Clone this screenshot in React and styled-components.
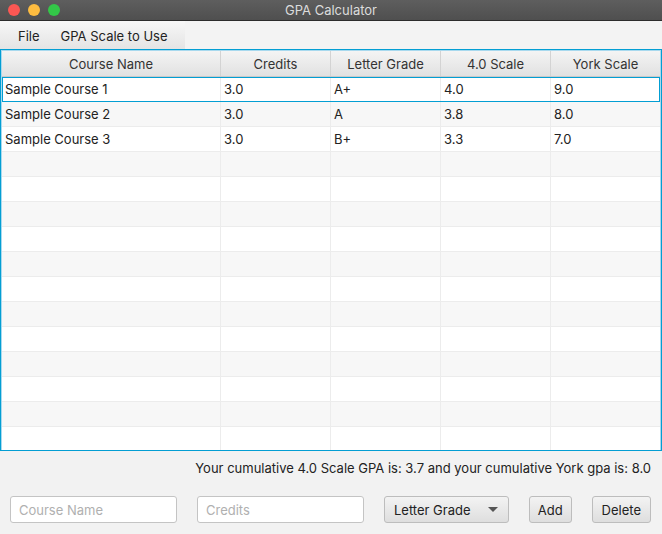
import styled, { createGlobalStyle } from "styled-components";

const GlobalStyle = createGlobalStyle`
  html, body {
    margin: 0;
    padding: 0;
    background: #f2f2f2;
  }
  body {
    font-family: Inter, Roboto, "Liberation Sans", sans-serif;
    font-size: 13px;
    color: #333;
  }
`;

const COLUMNS = [
  { key: "name", label: "Course Name", width: 219 },
  { key: "credits", label: "Credits", width: 110 },
  { key: "letter", label: "Letter Grade", width: 110 },
  { key: "four", label: "4.0 Scale", width: 110 },
  { key: "york", label: "York Scale", width: 110 },
];

const COURSES = [
  { name: "Sample Course 1", credits: "3.0", letter: "A+", four: "4.0", york: "9.0" },
  { name: "Sample Course 2", credits: "3.0", letter: "A", four: "3.8", york: "8.0" },
  { name: "Sample Course 3", credits: "3.0", letter: "B+", four: "3.3", york: "7.0" },
];

const EMPTY_ROWS = 12;

const StyledWindow = styled.div`
  width: 662px;
  height: 534px;
  display: flex;
  flex-direction: column;
  background: #f2f2f2;
  overflow: hidden;
`;

const StyledTitleBar = styled.div`
  height: 21px;
  flex-shrink: 0;
  display: flex;
  align-items: center;
  position: relative;
  background: linear-gradient(#5e5e5e, #4f4f4f);
  border-bottom: 1px solid #2c2c2c;
  box-sizing: border-box;
`;

const StyledLights = styled.div`
  display: flex;
  gap: 8px;
  padding-left: 8px;
`;

const StyledLight = styled.span`
  width: 12px;
  height: 12px;
  border-radius: 50%;
  background: ${(p) => p.color};
`;

const StyledTitle = styled.div`
  position: absolute;
  left: 0;
  right: 0;
  top: 0;
  text-align: center;
  color: #dcdcdc;
  font-size: 13px;
  line-height: 20px;
`;

const StyledMenuBar = styled.div`
  height: 28px;
  flex-shrink: 0;
  display: flex;
  background: #f3f3f3;
`;

const StyledMenuGroup = styled.div`
  width: 185px;
  display: flex;
  align-items: center;
  gap: 21px;
  padding: 2px 0 0 18px;
  box-sizing: border-box;
  background: linear-gradient(#f7f7f7, #e4e4e4);
`;

const StyledMenuItem = styled.span`
  color: #222;
  font-size: 13px;
`;

const StyledTable = styled.div`
  height: 402px;
  flex-shrink: 0;
  border: 1px solid #039ed3;
  box-shadow: inset 0 0 0 1px #a8d9ee;
  box-sizing: border-box;
  background: #fff;
  overflow: hidden;
  padding-top: 1px;
`;

const StyledRow = styled.div`
  display: flex;
  height: 25px;
  box-sizing: border-box;
  background: ${(p) => (p.$striped ? "#f7f7f7" : "#fff")};
  border-bottom: 1px solid #ececec;
  outline: ${(p) => (p.$selected ? "1px solid #039ed3" : "none")};
  outline-offset: -1px;
  position: relative;
  margin: 0 1px;
`;

const StyledHeaderRow = styled.div`
  display: flex;
  height: 26px;
  box-sizing: border-box;
  background: linear-gradient(#f4f4f4, #e1e1e1);
  border-bottom: 1px solid #c9c9c9;
  margin: 0 1px;
`;

const StyledHeaderCell = styled.div`
  width: ${(p) => p.$width}px;
  flex-shrink: 0;
  box-sizing: border-box;
  border-right: 1px solid #d3d3d3;
  display: flex;
  align-items: center;
  justify-content: center;
  padding-top: 1px;
  color: #333;
  &:last-child {
    flex: 1;
    border-right: none;
  }
`;

const StyledCell = styled.div`
  width: ${(p) => p.$width}px;
  flex-shrink: 0;
  box-sizing: border-box;
  border-right: 1px solid #ececec;
  display: flex;
  align-items: center;
  padding-left: 3px;
  color: #222;
  &:last-child {
    flex: 1;
    border-right: none;
  }
`;

const StyledFooter = styled.div`
  flex: 1;
  display: flex;
  flex-direction: column;
  padding: 8px 11px 0 10px;
`;

const StyledSummary = styled.div`
  text-align: right;
  line-height: 19px;
  color: #222;
`;

const StyledControls = styled.div`
  display: flex;
  gap: 20px;
  margin-top: 18px;
`;

const StyledInput = styled.input`
  width: 167px;
  height: 27px;
  box-sizing: border-box;
  border: 1px solid #c4c4c4;
  border-radius: 3px;
  background: #fff;
  padding: 0 8px;
  font-family: inherit;
  font-size: 13px;
  color: #222;
  &::placeholder {
    color: #b0b0b0;
  }
`;

const StyledButton = styled.button`
  height: 27px;
  box-sizing: border-box;
  border: 1px solid #bdbdbd;
  border-radius: 3px;
  background: linear-gradient(#f3f3f3, #dedede);
  padding: 0 ${(p) => (p.$wide ? 9 : 8)}px;
  font-family: inherit;
  font-size: 13px;
  color: #222;
  display: flex;
  align-items: center;
  justify-content: ${(p) => (p.$width ? "space-between" : "center")};
  width: ${(p) => (p.$width ? `${p.$width}px` : "auto")};
`;

const StyledArrow = styled.span`
  width: 0;
  height: 0;
  border-left: 5px solid transparent;
  border-right: 5px solid transparent;
  border-top: 5px solid #555;
  margin-right: 1px;
`;

const App = () => {
  const rows = [...COURSES, ...Array.from({ length: EMPTY_ROWS }, () => null)];

  return (
    <>
      <GlobalStyle />
      <StyledWindow>
        <StyledTitleBar>
          <StyledLights>
            <StyledLight color="#fc5753" />
            <StyledLight color="#fdbc40" />
            <StyledLight color="#33c748" />
          </StyledLights>
          <StyledTitle>GPA Calculator</StyledTitle>
        </StyledTitleBar>
        <StyledMenuBar>
          <StyledMenuGroup>
            <StyledMenuItem>File</StyledMenuItem>
            <StyledMenuItem>GPA Scale to Use</StyledMenuItem>
          </StyledMenuGroup>
        </StyledMenuBar>
        <StyledTable>
          <StyledHeaderRow>
            {COLUMNS.map((col) => (
              <StyledHeaderCell key={col.key} $width={col.width}>
                {col.label}
              </StyledHeaderCell>
            ))}
          </StyledHeaderRow>
          {rows.map((row, idx) => (
            <StyledRow key={idx} $striped={idx % 2 === 1} $selected={idx === 0}>
              {COLUMNS.map((col) => (
                <StyledCell key={col.key} $width={col.width}>
                  {row ? row[col.key] : ""}
                </StyledCell>
              ))}
            </StyledRow>
          ))}
        </StyledTable>
        <StyledFooter>
          <StyledSummary>
            Your cumulative 4.0 Scale GPA is: 3.7 and your cumulative York gpa is: 8.0
          </StyledSummary>
          <StyledControls>
            <StyledInput placeholder="Course Name" />
            <StyledInput placeholder="Credits" />
            <StyledButton $width={125} $wide>
              Letter Grade
              <StyledArrow />
            </StyledButton>
            <StyledButton>Add</StyledButton>
            <StyledButton $wide>Delete</StyledButton>
          </StyledControls>
        </StyledFooter>
      </StyledWindow>
    </>
  );
};

export default App;
